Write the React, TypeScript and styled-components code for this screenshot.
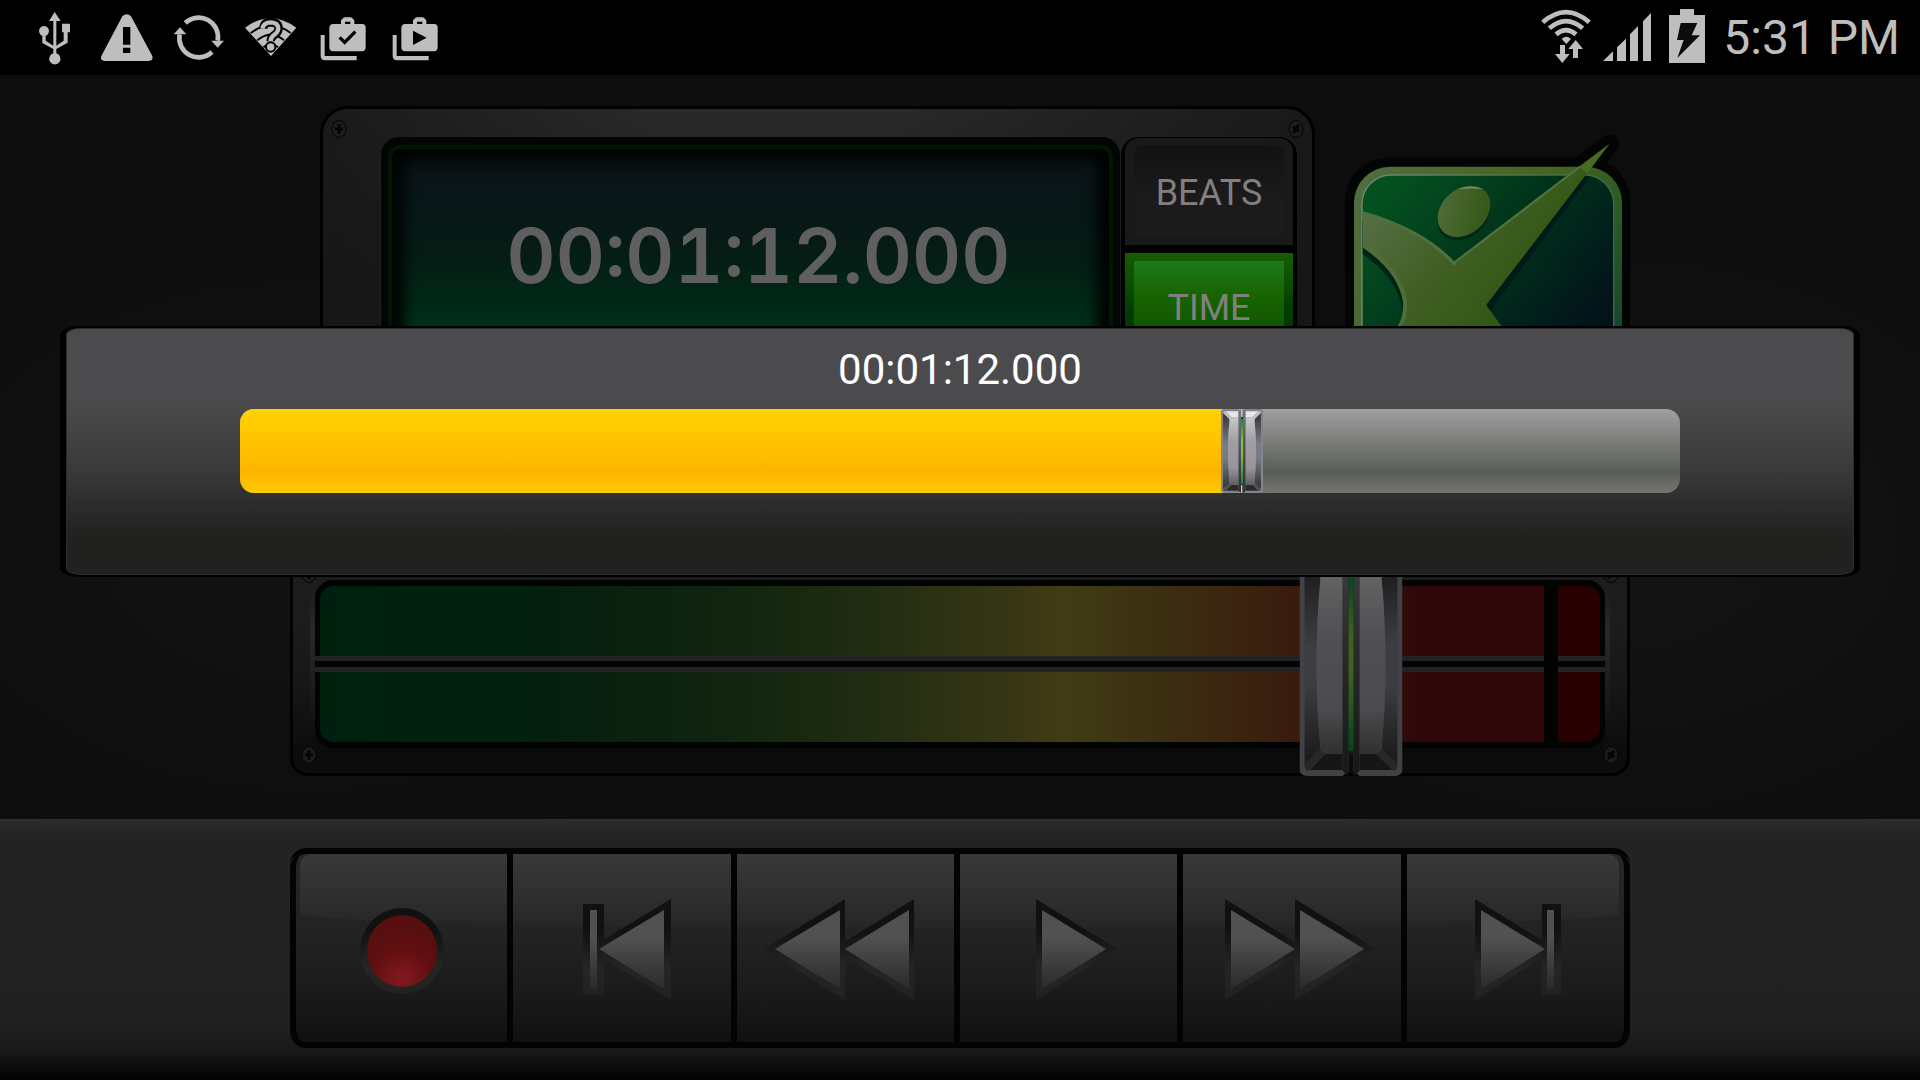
import React, { useState } from "react";
import styled, { createGlobalStyle } from "styled-components";

const GlobalStyle = createGlobalStyle`
  *, *::before, *::after { box-sizing: border-box; }
  body { margin: 0; background: #000; font-family: Roboto, "Noto Sans", sans-serif; }
  button, input { font: inherit; }
`;

const Screen = styled.div`
  position: relative;
  min-height: 100vh;
  display: flex;
  flex-direction: column;
  background: #0d0d0d;
`;

/* ---------- status bar ---------- */

const StatusBar = styled.header`
  height: 75px;
  padding: 0 20px 0 19px;
  display: flex;
  align-items: center;
  justify-content: space-between;
  background: #000;
  color: #bebebe;
`;

const Notifications = styled.div`
  display: flex;
`;

const SystemInfo = styled.div`
  display: flex;
  align-items: center;
  gap: 12px;
`;

const StatusIcon = styled.svg`
  display: block;
  height: 75px;
  fill: #bebebe;
`;

const Clock = styled.time`
  font-size: 48px;
  line-height: 76px;
`;

/* ---------- stage ---------- */

const Stage = styled.main`
  flex: 1;
  display: flex;
  flex-direction: column;
  justify-content: space-between;
  gap: 60px;
  padding: 31px 290px 43px;
  background:
    radial-gradient(ellipse 26% 46% at 84% 62%, #151515, transparent),
    radial-gradient(ellipse 26% 46% at 16% 62%, #131313, transparent),
    #0d0d0d;
`;

const TopRow = styled.section`
  display: flex;
  align-items: flex-start;
  gap: 30px;
  padding-left: 30px;
`;

const Panel = styled.div`
  position: relative;
  border: 3px solid #000;
`;

const DisplayPanel = styled(Panel)`
  flex: 1;
  display: flex;
  gap: 1px;
  padding: 28px 15px 28px 58px;
  border-radius: 28px;
  background:
    linear-gradient(180deg, transparent 0, #161616 220px),
    linear-gradient(90deg, #1a1a1a, #292929 33%, #292929 58%, #191919);
`;

const Lcd = styled.div`
  flex: 1;
  height: 308px;
  padding: 8px 7px;
  border-radius: 18px;
  background: #020505;
  box-shadow: -1px 1px 0 #1f1f1f;
`;

const LcdGlass = styled.div`
  height: 100%;
  display: flex;
  justify-content: center;
  padding: 60px 0 0 16px;
  border: 4px solid #021602;
  border-radius: 12px;
  background: linear-gradient(180deg, #0a1517 10%, #081817 25%, #051d14 38%, #002816 54%, #002f19 62%, #003a1c);
  box-shadow: inset 0 0 14px 12px #010303;
`;

const LcdDigits = styled.output`
  color: #5f5f5f;
  font-family: Inter, "DejaVu Sans", sans-serif;
  font-size: 76px;
  font-weight: 600;
  line-height: 92px;
  font-variant-numeric: tabular-nums;
`;

const Modes = styled.div`
  width: 176px;
  display: flex;
  flex-direction: column;
  gap: 8px;
  padding: 1px 4px 4px;
  border-radius: 18px 18px 0 0;
  background: #000;
`;

const ModeButton = styled.button<{ $on?: boolean }>`
  height: 107px;
  padding: 8px 9px;
  border: 0;
  border-radius: ${(p) => (p.$on ? "0" : "14px 14px 0 0")};
  color: #808080;
  font-size: 36px;
  line-height: 42px;
  background: ${(p) =>
    p.$on ? "linear-gradient(180deg, #155c00, #0c4d00 30%, #003f06 50%, #002d08)" : "#191919"};
`;

const ModeFace = styled.span<{ $on?: boolean }>`
  height: 100%;
  display: flex;
  align-items: center;
  justify-content: center;
  padding-top: 3px;
  border-radius: ${(p) => (p.$on ? "0" : "8px 8px 0 0")};
  background: ${(p) =>
    p.$on ? "linear-gradient(180deg, #1b7a1b, #176400 38%, #0c4a00)" : "linear-gradient(180deg, #121212, #1b1b1b 60%)"};
`;

const Brand = styled.svg`
  flex: none;
  display: block;
  width: 285px;
  height: 300px;
  margin-top: 29px;
`;

const ScrewIcon = styled.svg<{ $top?: boolean; $right?: boolean }>`
  position: absolute;
  width: 16px;
  height: 18px;
  ${(p) => (p.$top ? "top: 11px;" : "bottom: 9px;")}
  ${(p) => (p.$right ? "right: 8px;" : "left: 8px;")}
`;

/* ---------- level meter ---------- */

const MeterPanel = styled(Panel)`
  padding: 26px 17px 20px;
  border-radius: 18px;
  background: linear-gradient(180deg, #1c1c1c 30%, #171717 60%, #0c0c0c 90%);
`;

const MeterRim = styled.div`
  padding: 0 5px 5px;
  border-radius: 22px;
  background: linear-gradient(180deg, #1b1b1b, #292929 30%, #1d1d1d 60%, #090909);
`;

const MeterWell = styled.div`
  display: flex;
  flex-direction: column;
  border: solid #020404;
  border-width: 6px 0;
  border-radius: 18px;
  background: #020404;
  overflow: hidden;
`;

const MeterRow = styled.div<{ $bottom?: boolean }>`
  display: grid;
  grid-template-columns: 1fr 42px;
  gap: 14px;
  margin: 0 5px;
  height: 70px;
  overflow: hidden;
  border-radius: ${(p) => (p.$bottom ? "0 0 14px 14px" : "14px 14px 0 0")};
`;

const MeterScale = styled.div`
  background: linear-gradient(
    90deg,
    #00200f 0,
    #02200f 14%,
    #08200f 22%,
    #11250f 34%,
    #232d13 46%,
    #343514 55%,
    #413c14 61%,
    #3c3012 68%,
    #3b220f 76%,
    #35120c 84%,
    #2f0709 90%
  );
`;

const MeterPeak = styled.div`
  background: #290000;
`;

const Groove = styled.div`
  display: grid;
  grid-template-columns: 1fr 47px;
  gap: 14px;
  height: 16px;

  &::before,
  &::after {
    content: "";
    border: solid #222;
    border-width: 5px 0;
  }
`;

const FaderThumb = styled.svg<{ $dim?: boolean; $w: number }>`
  position: absolute;
  top: ${(p) => (p.$dim ? "-3px" : "0")};
  width: ${(p) => p.$w}px;
  height: ${(p) => (p.$dim ? "calc(100% + 6px)" : "100%")};
  transform: translateX(-50%);
  filter: ${(p) => (p.$dim ? "brightness(0.5)" : "none")};
  pointer-events: none;
`;

const RangeInput = styled.input`
  position: absolute;
  inset: 0;
  width: 100%;
  height: 100%;
  margin: 0;
  opacity: 0;
  cursor: pointer;
`;

/* ---------- transport deck ---------- */

const Deck = styled.footer`
  padding: 29px 290px 32px;
  background: linear-gradient(180deg, #2e2e2e 0, #232323 16px, #212121 76%, #1a1a1a 89%, #000);
`;

const Transport = styled.div`
  position: relative;
  display: grid;
  grid-template-columns: repeat(6, 1fr);
  height: 200px;
  border: solid #030303;
  border-width: 6px 0;
  border-radius: 16px;
  overflow: hidden;
  background: linear-gradient(180deg, #262626, #232323 42%, #1b1b1b 72%, #101010);

  &::before {
    content: "";
    position: absolute;
    inset: 0 11px auto 10px;
    height: 74px;
    border-radius: 12px 12px 50% 50% / 12px 12px 14px 14px;
    background: linear-gradient(180deg, rgba(255, 255, 255, 0.085), rgba(255, 255, 255, 0.06) 45%, rgba(255, 255, 255, 0.01));
  }
`;

const TransportButton = styled.button`
  position: relative;
  display: flex;
  align-items: center;
  justify-content: center;
  padding: 0;
  border: solid #030303;
  border-width: 0 6px 0 0;
  background: none;

  &:first-child {
    border-left-width: 6px;
    border-radius: 14px 0 0 14px;
  }
  &:last-child {
    border-radius: 0 14px 14px 0;
  }
`;

const TransportIcon = styled.svg`
  display: block;
  width: 160px;
  height: 110px;
  overflow: visible;
`;

/* ---------- position dialog ---------- */

const Dialog = styled.div`
  position: absolute;
  top: 326px;
  left: 60px;
  right: 60px;
  display: flex;
  flex-direction: column;
  gap: 15px;
  padding: 18px 174px 82px;
  border: solid #000;
  border-width: 2px 6px;
  border-radius: 20px / 9px;
  background: linear-gradient(180deg, #4b4b4d 28%, #444445 42%, #393939 58%, #2b2b2b 73%, #21211f 85%);
  box-shadow: inset 0 0 0 1px #2c2c2c;
`;

const DialogTime = styled.label`
  color: #fff;
  font-size: 42px;
  line-height: 48px;
  text-align: center;
`;

const Seek = styled.div`
  position: relative;
  height: 84px;
`;

const SeekTrack = styled.div`
  height: 100%;
  border-radius: 14px;
  overflow: hidden;
  background: linear-gradient(180deg, #9f9f9f, #5a5d58 75%, #737571);
`;

const SeekFill = styled.div`
  height: 100%;
  background: linear-gradient(180deg, #ffd300, #ffb400 76%, #ffca00);
`;

/* ---------- drawings ---------- */

function Screw({ top, right }: { top?: boolean; right?: boolean }) {
  return (
    <ScrewIcon $top={top} $right={right} viewBox="0 0 16 18" aria-hidden="true">
      <ellipse cx="8" cy="9" rx="7" ry="8.5" fill="#1d1d1d" stroke="#020202" />
      <path
        d="M8 4v10M4 9h8"
        stroke="#050505"
        strokeWidth="3"
        transform={right ? "rotate(35 8 9)" : undefined}
      />
    </ScrewIcon>
  );
}

function Fader({ id, width, percent, dim }: { id: string; width: number; percent: number; dim?: boolean }) {
  const half = (
    <>
      <path d="M8 0H43L49 5V219L43 224H8Q0 224 0 216V8Q0 0 8 0Z" fill="#82858c" />
      <path d="M5 11L21 27Q13 112 21 197L5 213Z" fill={`url(#${id}-side)`} />
      <path d="M10 6H43V22H26Z" fill="#e6e8e8" />
      <path d="M5 9L8 5L26 22L21 27Z" fill="#bfc5c5" />
      <path d="M10 218L26 202H43V218Z" fill="#2b2b2b" />
      <path d="M5 213L21 197L26 202L9 219Q5 218 5 213Z" fill="#505050" />
      <path d="M26 22H43V202H26L21 197Q13 112 21 27Z" fill={`url(#${id}-plate)`} />
      <path d="M43 5L49 0V224L43 219Z" fill={`url(#${id}-groove)`} />
    </>
  );
  return (
    <FaderThumb
      $dim={dim}
      $w={width}
      viewBox="0 0 103 224"
      preserveAspectRatio="none"
      style={{ left: `${percent}%` }}
      aria-hidden="true"
    >
      <defs>
        <linearGradient id={`${id}-side`} x1="0" y1="0" x2="0" y2="1">
          <stop offset="0.05" stopColor="#3c3c3f" />
          <stop offset="0.42" stopColor="#7a7c86" />
          <stop offset="0.6" stopColor="#787a82" />
          <stop offset="0.95" stopColor="#3a3a3b" />
        </linearGradient>
        <linearGradient id={`${id}-plate`} x1="0" y1="0" x2="0" y2="1">
          <stop offset="0" stopColor="#c6c8ca" />
          <stop offset="0.35" stopColor="#a19fa4" />
          <stop offset="0.75" stopColor="#98949a" />
          <stop offset="1" stopColor="#606060" />
        </linearGradient>
        <linearGradient id={`${id}-groove`} x1="0" y1="0" x2="0" y2="1">
          <stop offset="0" stopColor="#77797f" />
          <stop offset="0.5" stopColor="#505053" />
          <stop offset="1" stopColor="#2f2f2f" />
        </linearGradient>
        <linearGradient id={`${id}-light`} x1="0" y1="0" x2="0" y2="1">
          <stop offset="0" stopColor="#128a3c" />
          <stop offset="0.35" stopColor="#80c241" />
          <stop offset="0.55" stopColor="#80c241" />
          <stop offset="1" stopColor="#0b8a3c" />
        </linearGradient>
      </defs>
      <g>{half}</g>
      <g transform="translate(103 0) scale(-1 1)">{half}</g>
      <rect x="49" y="21" width="5" height="182" fill="#333" />
      <rect x="49" y="26" width="5" height="173" fill={`url(#${id}-light)`} />
    </FaderThumb>
  );
}

function Logo() {
  const arm = "M403 425L868 72L498 555Z";
  const body =
    "M128 275C240 305 340 360 403 425L868 72L498 555L700 830H128V800Q268 660 255 545Q240 450 128 375Z";
  return (
    <Brand viewBox="75 45 855 900" role="img" aria-label="App logo">
      <defs>
        <linearGradient id="logo-frame" x1="0" y1="0" x2="1" y2="0.6">
          <stop offset="0" stopColor="#526d44" />
          <stop offset="0.55" stopColor="#456520" />
          <stop offset="0.8" stopColor="#2b5a24" />
          <stop offset="1" stopColor="#15482d" />
        </linearGradient>
        <linearGradient id="logo-field" x1="0" y1="0" x2="1" y2="0.8">
          <stop offset="0.1" stopColor="#045020" />
          <stop offset="0.5" stopColor="#00301b" />
          <stop offset="0.75" stopColor="#021b1b" />
          <stop offset="1" stopColor="#070818" />
        </linearGradient>
        <linearGradient id="logo-body" gradientUnits="userSpaceOnUse" x1="130" y1="280" x2="560" y2="620">
          <stop offset="0" stopColor="#566f46" />
          <stop offset="0.5" stopColor="#415f24" />
          <stop offset="1" stopColor="#305612" />
        </linearGradient>
        <linearGradient id="logo-head" x1="0" y1="0" x2="1" y2="1">
          <stop offset="0.1" stopColor="#4f6c3a" />
          <stop offset="0.9" stopColor="#345614" />
        </linearGradient>
        <linearGradient id="logo-line" x1="0" y1="0" x2="1" y2="0">
          <stop offset="0" stopColor="#6f8a70" />
          <stop offset="0.6" stopColor="#52753a" />
          <stop offset="1" stopColor="#356a4c" />
        </linearGradient>
        <clipPath id="logo-clip">
          <rect x="128" y="167" width="751" height="730" rx="85" />
        </clipPath>
      </defs>
      <rect x="75" y="113" width="855" height="830" rx="130" fill="#030404" />
      <path d={arm} fill="#030404" stroke="#030404" strokeWidth="56" strokeLinejoin="round" />
      <rect x="102" y="140" width="804" height="780" rx="108" fill="url(#logo-frame)" />
      <rect x="126" y="165" width="755" height="732" rx="87" fill="url(#logo-field)" stroke="url(#logo-line)" strokeWidth="4" />
      <g clipPath="url(#logo-clip)">
        <path d={body} fill="#001d18" transform="translate(-8 22)" opacity="0.85" />
        <path d="M868 92L508 575L498 555L840 110Z" fill="#001a18" />
        <path d={body} fill="url(#logo-body)" />
        <path d="M128 375Q240 450 255 545Q258 590 238 622" fill="none" stroke="#4f6f38" strokeWidth="12" />
        <path d="M128 278C240 308 340 363 403 431L760 160" fill="none" stroke="#50703c" strokeWidth="9" />
        <ellipse cx="432" cy="284" rx="88" ry="67" transform="rotate(-42 432 284)" fill="#002818" />
      </g>
      <path d={arm} fill="url(#logo-body)" />
      <path d="M868 72L800 162L780 138Z" fill="#466b22" />
      <path d="M403 428L780 140" fill="none" stroke="#50703c" strokeWidth="7" />
      <ellipse cx="432" cy="274" rx="88" ry="67" transform="rotate(-42 432 274)" fill="url(#logo-head)" />
      <path d="M412 208Q450 191 490 207Q448 203 412 208Z" fill="#748a6a" />
    </Brand>
  );
}

function NotificationIcons() {
  return (
    <Notifications>
      <StatusIcon width="72" viewBox="57 0 216 225" aria-label="USB connected">
        <path d="M164 36L182 63H169V137L191 122V97H186V71H210V97H203V128L169 147V160A17 17 0 1 1 160 160V147L127 129V107A15 15 0 1 1 137 107V122L160 137V63H147Z" />
      </StatusIcon>
      <StatusIcon width="72" viewBox="273 0 216 225" aria-label="Warning">
        <path
          fillRule="evenodd"
          d="M367 49Q380 36 393 49L457 168Q461 182 446 183H315Q299 182 304 168ZM369 81V134H391V81ZM369 143V159H391V143Z"
        />
      </StatusIcon>
      <StatusIcon width="72" viewBox="489 0 216 225" aria-label="Syncing">
        <path d="M556 69A58 58 0 0 1 653 122" fill="none" stroke="#bebebe" strokeWidth="14" />
        <path d="M636 156A58 58 0 0 1 539 103" fill="none" stroke="#bebebe" strokeWidth="14" />
        <path d="M634 122H672L653 143Z" />
        <path d="M521 103L540 82L559 103Z" />
      </StatusIcon>
      <StatusIcon width="72" viewBox="705 0 216 225" aria-label="Unknown Wi-Fi">
        <path d="M735 83Q812 26 889 83L813 168Z" />
        <path d="M752 99Q812 54 872 99M772 121Q812 88 852 121M790 142Q812 124 834 142" fill="none" stroke="#000" strokeWidth="6" />
        <path d="M790 86Q791 66 812 66Q836 67 836 86Q835 98 822 106Q812 112 812 124" fill="none" stroke="#000" strokeWidth="25" />
        <circle cx="812" cy="141" r="17" fill="#000" />
        <path d="M787 86Q791 67 812 67Q835 68 835 86Q834 97 822 105Q812 112 812 123" fill="none" stroke="#bebebe" strokeWidth="13" />
        <circle cx="812" cy="141" r="11" />
      </StatusIcon>
      <StatusIcon width="72" viewBox="921 0 216 225" aria-label="App updated">
        <path d="M962 105H974V168H1070V181H974Q962 180 962 168Z" />
        <path
          fillRule="evenodd"
          d="M1023 72V61L1032 52H1054L1063 61V72H1087Q1097 73 1097 83V143Q1096 153 1087 154H999Q989 153 988 143V83Q989 73 999 72ZM1035 72H1051V65H1035Z"
        />
        <path d="M1019 112L1034 127L1066 95" fill="none" stroke="#000" strokeWidth="10" />
      </StatusIcon>
      <StatusIcon width="72" viewBox="1137 0 216 225" aria-label="Play store">
        <path d="M1178 105H1190V168H1286V181H1190Q1178 180 1178 168Z" />
        <path
          fillRule="evenodd"
          d="M1239 72V61L1248 52H1270L1279 61V72H1303Q1313 73 1313 83V143Q1312 153 1303 154H1215Q1205 153 1204 143V83Q1205 73 1215 72ZM1251 72H1267V65H1251ZM1239 92V135L1280 113Z"
        />
      </StatusIcon>
    </Notifications>
  );
}

function SystemIcons() {
  return (
    <>
      <StatusIcon width="50" viewBox="126 0 150 225" aria-label="Wi-Fi">
        <path
          d="M131 67Q201 6 271 67M151 85Q201 42 251 85M171 103Q201 78 231 103"
          fill="none"
          stroke="#bebebe"
          strokeWidth="14"
        />
        <path d="M188 117Q202 104 216 117L202 132Z" />
        <path d="M183 135H198V162H212L190 189L168 162H183Z" />
        <path d="M230 120L252 147H237V174H222V147H208Z" />
      </StatusIcon>
      <StatusIcon width="54" viewBox="309 0 162 225" aria-label="Signal strength">
        <path d="M309 183L339 154V183ZM351 183V142L378 116V183ZM390 183V103L414 78V183ZM429 183V64L453 39V183Z" />
      </StatusIcon>
      <StatusIcon width="42" viewBox="507 0 126 225" aria-label="Battery charging">
        <path d="M507 45H540V27H582V45H615V189H507Z" />
        <path d="M542 69H592L575 106H600L532 174L551 120H531Z" fill="#0c0c0c" />
      </StatusIcon>
    </>
  );
}

type Shape = { edge: string; face: string };

const arrow = (tip: number, x: number, outerTip: number, outerX: number): Shape => ({
  edge: `M${outerTip} 56L${outerX} 6V107Z`,
  face: `M${tip} 56L${x} 17V96Z`,
});
const bar = (x: number, ox: number, ow: number): Shape => ({
  edge: `M${ox} 11h${ow}v91h-${ow}Z`,
  face: `M${x} 17h7v79h-7Z`,
});

const transport: { name: string; shapes: Shape[] }[] = [
  { name: "Record", shapes: [] },
  { name: "Go to start", shapes: [bar(48, 41, 21), arrow(57, 122, 46, 129)] },
  { name: "Rewind", shapes: [arrow(10, 75, -1, 80), arrow(80, 144, 68, 149)] },
  { name: "Play", shapes: [arrow(117, 53, 128, 47)] },
  { name: "Fast forward", shapes: [arrow(83, 19, 94, 13), arrow(152, 88, 164, 83)] },
  { name: "Go to end", shapes: [arrow(110, 46, 121, 40), bar(112, 107, 19)] },
];

function TransportGlyph({ shapes }: { shapes: Shape[] }) {
  return (
    <TransportIcon viewBox="0 0 160 110" aria-hidden="true">
      <defs>
        <linearGradient id="edge" gradientUnits="userSpaceOnUse" x1="0" y1="6" x2="0" y2="107">
          <stop offset="0.3" stopColor="#111" />
          <stop offset="0.68" stopColor="#252525" />
          <stop offset="1" stopColor="#212121" />
        </linearGradient>
        <linearGradient id="face" gradientUnits="userSpaceOnUse" x1="0" y1="17" x2="0" y2="96">
          <stop offset="0.35" stopColor="#515151" />
          <stop offset="1" stopColor="#2a2a2a" />
        </linearGradient>
        <radialGradient id="record" gradientUnits="userSpaceOnUse" cx="80" cy="86" r="50">
          <stop offset="0.1" stopColor="#7d181f" />
          <stop offset="0.6" stopColor="#620f11" />
          <stop offset="1" stopColor="#570f0f" />
        </radialGradient>
      </defs>
      {shapes.length === 0 && (
        <>
          <ellipse cx="80" cy="58" rx="42" ry="43" fill="url(#edge)" />
          <ellipse cx="80" cy="58" rx="35" ry="36" fill="url(#record)" />
        </>
      )}
      {shapes.map((s) => (
        <path key={s.edge} d={s.edge} fill="url(#edge)" />
      ))}
      {shapes.map((s) => (
        <path key={s.face} d={s.face} fill="url(#face)" />
      ))}
    </TransportIcon>
  );
}

/* ---------- app ---------- */

const format = (ms: number) => {
  const pad = (n: number, size = 2) => String(Math.floor(n)).padStart(size, "0");
  return `${pad(ms / 3600000)}:${pad((ms / 60000) % 60)}:${pad((ms / 1000) % 60)}.${pad(ms % 1000, 3)}`;
};

const DURATION = 103450;

export default function App() {
  const [position, setPosition] = useState(72000);
  const [level, setLevel] = useState(793);
  const [mode, setMode] = useState("TIME");
  const percent = (position / DURATION) * 100;

  return (
    <Screen>
      <GlobalStyle />
      <StatusBar>
        <NotificationIcons />
        <SystemInfo>
          <SystemIcons />
          <Clock>5:31 PM</Clock>
        </SystemInfo>
      </StatusBar>

      <Stage>
        <TopRow>
          <DisplayPanel>
            <Screw top />
            <Screw top right />
            <Lcd>
              <LcdGlass>
                <LcdDigits>{format(position)}</LcdDigits>
              </LcdGlass>
            </Lcd>
            <Modes>
              {["BEATS", "TIME"].map((name) => (
                <ModeButton key={name} $on={mode === name} onClick={() => setMode(name)}>
                  <ModeFace $on={mode === name}>{name}</ModeFace>
                </ModeButton>
              ))}
            </Modes>
          </DisplayPanel>
          <Logo />
        </TopRow>

        <MeterPanel>
          <Screw top />
          <Screw top right />
          <Screw />
          <Screw right />
          <MeterRim>
            <MeterWell>
              <MeterRow>
                <MeterScale />
                <MeterPeak />
              </MeterRow>
              <Groove />
              <MeterRow $bottom>
                <MeterScale />
                <MeterPeak />
              </MeterRow>
            </MeterWell>
          </MeterRim>
          <Fader id="level" width={103} percent={level / 10} dim />
          <RangeInput
            type="range"
            aria-label="Level"
            min={0}
            max={1000}
            value={level}
            onChange={(e) => setLevel(Number(e.target.value))}
          />
        </MeterPanel>
      </Stage>

      <Deck>
        <Transport>
          {transport.map((t) => (
            <TransportButton key={t.name} aria-label={t.name}>
              <TransportGlyph shapes={t.shapes} />
            </TransportButton>
          ))}
        </Transport>
      </Deck>

      <Dialog role="dialog" aria-label="Position">
        <DialogTime htmlFor="seek">{format(position)}</DialogTime>
        <Seek>
          <SeekTrack>
            <SeekFill style={{ width: `${percent}%` }} />
          </SeekTrack>
          <Fader id="seek-thumb" width={42} percent={percent} />
          <RangeInput
            id="seek"
            type="range"
            min={0}
            max={DURATION}
            value={position}
            onChange={(e) => setPosition(Number(e.target.value))}
          />
        </Seek>
      </Dialog>
    </Screen>
  );
}
